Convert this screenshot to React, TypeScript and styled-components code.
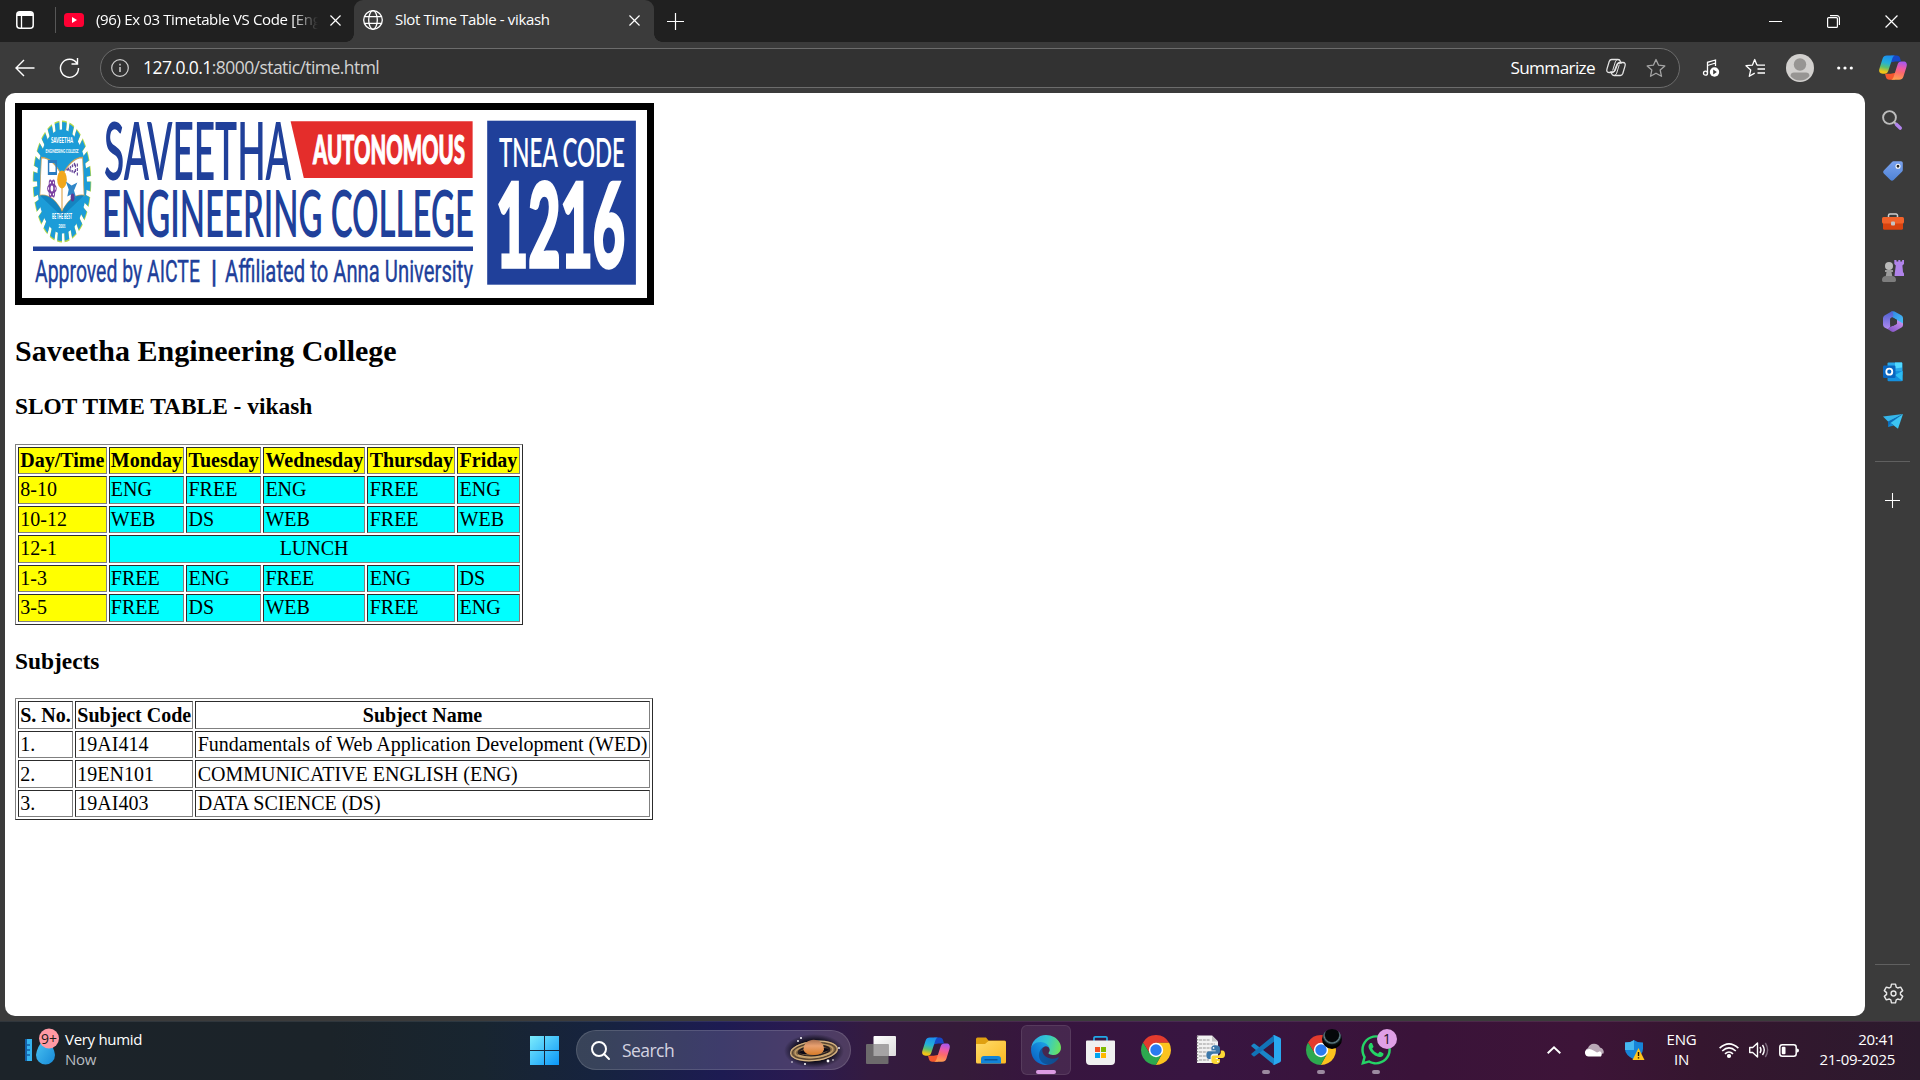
import React from "react";
import styled, { createGlobalStyle } from "styled-components";
import { FaWhatsapp } from "react-icons/fa";

const ui = `"Open Sans", "Noto Sans", sans-serif`;

const GlobalStyle = createGlobalStyle`
  html, body { margin: 0; padding: 0; background: #3b3b3b; }
  * { box-sizing: border-box; }
`;

const Screen = styled.div`
  width: 1920px;
  height: 1080px;
  display: flex;
  flex-direction: column;
  overflow: hidden;
  background: #3b3b3b;
  color: #fff;
  font-family: ${ui};
`;

const Row = styled.div`
  display: flex;
  align-items: center;
`;

const Icon = styled.svg<{ $ml?: number; $mt?: number }>`
  display: block;
  flex: none;
  overflow: visible;
  margin-left: ${(p) => p.$ml ?? 0}px;
  margin-top: ${(p) => p.$mt ?? 0}px;
`;

const Label = styled.span<{ $size: number; $ls?: number; $color?: string }>`
  font-size: ${(p) => p.$size}px;
  letter-spacing: ${(p) => p.$ls ?? 0}px;
  color: ${(p) => p.$color ?? "#fff"};
  white-space: nowrap;
`;

/* ---------- tab strip ---------- */

const TabStrip = styled.header`
  height: 42px;
  flex: none;
  display: flex;
  background: #202020;
`;

const StripStart = styled(Row)`
  width: 57px;
  padding-left: 16px;
  gap: 21px;
  height: 40px;
`;

const Divider = styled.i`
  width: 1px;
  height: 26px;
  background: #575757;
`;

const InactiveTab = styled(Row)`
  width: 297px;
  height: 40px;
  padding-left: 7px;
`;

const FadedTitle = styled.div`
  width: 222px;
  margin-left: 12px;
  padding-bottom: 2px;
  overflow: hidden;
  line-height: 24px;
  display: flex;
  mask-image: linear-gradient(90deg, #000 88%, transparent 100%);
`;

const ActiveTab = styled(Row)`
  position: relative;
  width: 300px;
  height: 42px;
  padding: 0 14px 2px 9px;
  background: #3b3b3b;
  border-radius: 9px 9px 0 0;
  &::before,
  &::after {
    content: "";
    position: absolute;
    bottom: 0;
    width: 8px;
    height: 8px;
  }
  &::before {
    left: -8px;
    background: radial-gradient(circle at 0 0, transparent 7.5px, #3b3b3b 8px);
  }
  &::after {
    right: -8px;
    background: radial-gradient(circle at 100% 0, transparent 7.5px, #3b3b3b 8px);
  }
`;

const TabTitle = styled(Label)`
  margin-left: 12px;
  padding-bottom: 2px;
  flex: 1;
`;

const WindowButtons = styled(Row)`
  margin-left: auto;
  height: 42px;
  padding-right: 22px;
  gap: 45px;
`;

/* ---------- toolbar ---------- */

const Toolbar = styled.nav`
  height: 51px;
  flex: none;
  display: flex;
  align-items: center;
  padding: 0 13px 0 15px;
`;

const NavButtons = styled(Row)`
  width: 85px;
  gap: 24px;
`;

const AddressBar = styled(Row)`
  width: 1580px;
  height: 40px;
  padding: 0 13px 0 10px;
  border: 1px solid #6c6c6c;
  border-radius: 20px;
  background: #323232;
`;

const Url = styled(Label)`
  margin-left: 14px;
  padding-bottom: 1px;
  flex: 1;
`;

const Summarize = styled(Label)`
  padding-bottom: 1px;
`;

const ToolbarEnd = styled(Row)`
  flex: 1;
  padding-left: 22px;
`;

/* ---------- page + sidebar ---------- */

const Middle = styled.div`
  display: flex;
  height: 928px;
  flex: none;
`;

const PageFrame = styled.main`
  width: 1860px;
  height: 923px;
  margin-left: 5px;
  background: #fff;
  border-radius: 10px;
  overflow: hidden;
  color: #000;
`;

const Page = styled.div`
  zoom: 1.25;
  padding: 8px;
  font: 16px "Liberation Serif", "Times New Roman", serif;
`;

const Banner = styled.svg`
  border: 6px solid #000;
  box-sizing: content-box;
`;

const Title = styled.h2`
  font-size: 1.5em;
  margin: 0.83em 0;
`;

const Heading = styled.h3`
  font-size: 1.17em;
  margin: 1em 0;
`;

const Table = styled.table`
  border: 1px outset gray;
  border-spacing: 2px;
  border-collapse: separate;
`;

const Cell = styled.td<{ $bg?: string; $center?: boolean }>`
  border: 1px inset gray;
  padding: 1px;
  background: ${(p) => p.$bg ?? "transparent"};
  text-align: ${(p) => (p.$center ? "center" : "left")};
`;

const HeadCell = styled(Cell)`
  font-weight: bold;
  text-align: center;
`;

const Sidebar = styled.aside`
  width: 55px;
  padding: 2px 0 0;
  display: flex;
  flex-direction: column;
  align-items: center;
`;

const SideItem = styled.div<{ $h?: number }>`
  height: ${(p) => p.$h ?? 50.2}px;
  flex: none;
  display: flex;
  align-items: center;
  justify-content: center;
`;

const SideRule = styled.i<{ $top?: string }>`
  width: 35px;
  height: 1px;
  flex: none;
  margin-top: ${(p) => p.$top ?? "15px"};
  background: #606060;
`;

/* ---------- taskbar ---------- */

const Taskbar = styled.footer`
  height: 59px;
  flex: none;
  display: flex;
  align-items: center;
  padding-bottom: 1px;
  box-shadow: inset 0 1px rgba(255, 255, 255, 0.09);
  background: linear-gradient(
    90deg,
    #1c2329 0,
    #1b2329 330px,
    #182530 480px,
    #16233f 600px,
    #1d1b52 720px,
    #2a1a50 800px,
    #341b40 870px,
    #351b39 960px,
    #37153f 1040px,
    #381541 1200px,
    #3a1339 1420px,
    #3d1438 1580px,
    #35162f 1700px,
    #2c1a2d 1920px
  );
`;

const Weather = styled(Row)`
  width: 521px;
  padding-left: 25px;
`;

const Lines = styled.div<{ $align?: string; $ml: number }>`
  display: flex;
  flex-direction: column;
  text-align: ${(p) => p.$align ?? "left"};
  line-height: 20px;
  margin: -3px 0 0 ${(p) => p.$ml}px;
`;

const StartButton = styled(Row)`
  width: 55px;
  padding-left: 9px;
`;

const SearchBox = styled(Row)`
  width: 275px;
  height: 40px;
  padding: 0 6px 0 14px;
  border-radius: 20px;
  border: 1px solid rgba(255, 255, 255, 0.13);
  background: rgba(255, 255, 255, 0.15);
`;

const SearchText = styled(Label)`
  flex: 1;
  margin-left: 12px;
  padding-bottom: 1px;
`;

const Apps = styled(Row)`
  gap: 5px;
  margin-left: 5px;
`;

const App_ = styled.div<{ $active?: boolean; $running?: boolean }>`
  position: relative;
  width: 50px;
  height: 50px;
  display: flex;
  align-items: center;
  justify-content: center;
  border-radius: 6px;
  border: 1px solid ${(p) => (p.$active ? "rgba(255,255,255,.09)" : "transparent")};
  background: ${(p) => (p.$active ? "rgba(255,255,255,.08)" : "transparent")};
  &::after {
    content: "";
    display: ${(p) => (p.$active || p.$running ? "block" : "none")};
    position: absolute;
    bottom: 0;
    width: ${(p) => (p.$active ? 20 : 8)}px;
    height: 4px;
    border-radius: 2px;
    background: ${(p) => (p.$active ? "#dc9be4" : "#9c8aa0")};
  }
`;

const Badge = styled.b<{ $bg: string }>`
  position: absolute;
  top: 3px;
  right: 3px;
  width: 20px;
  height: 20px;
  border-radius: 50%;
  background: ${(p) => p.$bg};
  color: #1c1020;
  font-weight: 400;
  font-size: 14px;
  line-height: 20px;
  text-align: center;
`;

const Tray = styled(Row)`
  margin-left: auto;
  padding-right: 25px;
`;

/* ---------- drawings ---------- */

const Copilot = ({ w, ml }: { w: number; ml?: number }) => (
  <Icon width={w} height={w * 0.9} viewBox="0 0 30 27" $ml={ml}>
    <defs>
      <linearGradient id="cpL" x1="0.5" y1="0" x2="0.3" y2="1">
        <stop offset="0" stopColor="#1c8ff0" />
        <stop offset=".4" stopColor="#24b0d8" />
        <stop offset=".65" stopColor="#5cc070" />
        <stop offset=".9" stopColor="#f0c418" />
      </linearGradient>
      <linearGradient id="cpR" x1="0.6" y1="0" x2="0.4" y2="1">
        <stop offset="0" stopColor="#ffa04e" />
        <stop offset=".4" stopColor="#fb6b6a" />
        <stop offset=".65" stopColor="#ee5aa5" />
        <stop offset="1" stopColor="#a758ee" />
      </linearGradient>
    </defs>
    <path d="M13 .5h6c2 0 3 1 3.600 3l1 3.500h-6L12 8z" fill="#1648c8" />
    <path d="M17 26.500h-6c-2 0-3-1-3.600-3l-1-3.500h6L18 19z" fill="#f4572e" />
    <path d="M8.500.5h9c-1.800.3-2.700 1.500-3.300 3.500l-4.200 13c-.7 2.200-1.800 3-4 3H4c-3.300 0-4.500-2.200-3.500-5.500L3.800 4C4.600 1.600 6 .5 8.500.5Z" fill="url(#cpL)" />
    <path transform="rotate(180 15 13.5)" d="M8.500.5h9c-1.800.3-2.700 1.500-3.300 3.500l-4.200 13c-.7 2.200-1.800 3-4 3H4c-3.300 0-4.500-2.200-3.500-5.500L3.800 4C4.600 1.600 6 .5 8.500.5Z" fill="url(#cpR)" />
  </Icon>
);

const Chrome = () => (
  <Icon width={30} height={30} viewBox="-15 -15 30 30">
    <path d="M0-7.200H13.150A15 15 0 0 0-12.990-7.500L-6.200 3.600Z" fill="#e33b2e" />
    <path d="M6.200 3.600L-.2 15A15 15 0 0 0 13.150-7.200H0Z" fill="#fcc31e" />
    <path d="M-6.200 3.600L-12.990-7.500A15 15 0 0 0-.2 15L6.200 3.600Z" fill="#2da94f" />
    <circle r="7.200" fill="#fff" />
    <circle r="5.700" fill="#2a7bf0" />
  </Icon>
);

const Edge = () => (
  <Icon width={30} height={30} viewBox="0 0 256 256">
    <defs>
      <linearGradient id="e1" x1="0" y1="0" x2="1" y2="0">
        <stop offset="0" stopColor="#0c59a4" />
        <stop offset="1" stopColor="#114a8b" />
      </linearGradient>
      <linearGradient id="e2" x1=".9" y1=".3" x2=".3" y2="1">
        <stop offset="0" stopColor="#1b9de2" />
        <stop offset=".4" stopColor="#1383d8" />
        <stop offset="1" stopColor="#0a64c4" />
      </linearGradient>
      <linearGradient id="e3" x1="0" y1=".4" x2="1" y2=".6">
        <stop offset="0" stopColor="#2aa8e8" />
        <stop offset=".5" stopColor="#33c8cf" />
        <stop offset="1" stopColor="#6ce35c" />
      </linearGradient>
    </defs>
    <path fill="url(#e1)" d="M231 190.500c-3.400 1.800-6.900 3.400-10.500 4.700a101.500 101.500 0 0 1-35.900 6.500c-47.300 0-88.500-32.500-88.500-74.300a31.500 31.500 0 0 1 16.400-27.300c-42.800 1.800-53.800 46.400-53.800 72.500 0 73.900 68.100 81.400 82.800 81.400 7.900 0 19.800-2.300 27-4.600l1.300-.4a128.300 128.300 0 0 0 66.600-52.800 4 4 0 0 0-5.400-5.700z" />
    <path fill="url(#e2)" d="M105.700 241.400a79.200 79.200 0 0 1-22.700-21.300 80.700 80.700 0 0 1 29.500-120c3.200-1.500 8.500-4.100 15.600-4a32.400 32.400 0 0 1 25.700 13 31.900 31.900 0 0 1 6.300 18.700c0-.2 24.500-79.600-80-79.600-43.900 0-80 41.700-80 78.200a130.200 130.200 0 0 0 12.100 56 128 128 0 0 0 156.400 67 75.500 75.500 0 0 1-62.800-8z" />
    <path fill="url(#e3)" d="M152.300 148.900c-.9 1-3.400 2.500-3.400 5.600 0 2.600 1.700 5.200 4.800 7.300 14.300 10 41.400 8.600 41.500 8.600 10.700 0 21.100-2.900 30.300-8.300a61.400 61.400 0 0 0 30.400-52.900c.3-22.400-8-37.300-11.300-43.900C223.500 23.900 177.700 0 128 0A128 128 0 0 0 0 126.200c.5-36.500 36.800-66 80-66 3.500 0 23.500.3 42 10.100 16.300 8.600 24.900 18.900 30.800 29.200 6.200 10.700 7.300 24.100 7.300 29.500 0 5.300-2.700 13.300-7.800 19.900z" />
  </Icon>
);

const Cross = ({ size, ml, sw = 1.3 }: { size: number; ml?: number; sw?: number }) => (
  <Icon width={size} height={size} viewBox="0 0 12 12" $ml={ml} fill="none" stroke="#fff" strokeWidth={sw}>
    <path d="M.5.5l11 11M11.500.5l-11 11" />
  </Icon>
);

const Plus = ({ size, ml }: { size: number; ml?: number }) => (
  <Icon width={size} height={size} viewBox="0 0 17 17" $ml={ml} stroke="#fff" strokeWidth="1.200">
    <path d="M8.500 0v17M0 8.500h17" />
  </Icon>
);

type FitProps = { x: number; y: number; w: number; size: number; weight: number; fill: string; family?: string; bold?: number; children: string };
const Fit = ({ x, y, w, size, weight, fill, family = "Lato", bold = 0, children }: FitProps) => (
  <text x={x} y={y} fontSize={size} fontWeight={weight} fill={fill} stroke={fill} strokeWidth={bold} fontFamily={`${family}, sans-serif`} textLength={w} lengthAdjust="spacingAndGlyphs">
    {children}
  </text>
);

const CollegeBanner = () => (
  <Banner width="500" height="150" viewBox="0 0 625 187.5">
    <rect width="625" height="187.5" fill="#fff" />
    <g transform="translate(40 71.5) scale(.48 1)">
      <circle r="56" fill="none" stroke="#b5d84a" strokeWidth="10" pathLength="240" strokeDasharray="6.500 3.500" />
      <circle r="54.500" fill="none" stroke="#1c9cd8" strokeWidth="10" pathLength="240" strokeDasharray="6 4" strokeDashoffset="-.2" />
      <circle r="52" fill="#1c9cd8" />
      <path d="M-43-24Q-20-24 0 -6Q20-24 43-24L46 14Q20 12 0 30Q-20 12-46 14Z" fill="#fff" stroke="#c9a25c" strokeWidth="1.500" />
      <path d="M-46 14Q-20 12 0 30Q20 12 46 14L0 35Z" fill="#1484c0" />
      <path d="M0-6V30" stroke="#d9962c" strokeWidth="2" />
      <ellipse cy="-2" rx="10" ry="9" fill="#f2a81d" />
      <rect x="-28" y="-20" width="16" height="12" fill="none" stroke="#2a7cc0" strokeWidth="3" />
      <path d="M12-12l16-6v9zM32-18v12" stroke="#6a4a9c" strokeWidth="2.500" fill="none" strokeDasharray="3 1.500" />
      <g fill="none" stroke="#7b3fa0" strokeWidth="2">
        <ellipse cx="-21" cy="7" rx="9" ry="4" />
        <ellipse cx="-21" cy="7" rx="9" ry="4" transform="rotate(60 -21 7)" />
        <ellipse cx="-21" cy="7" rx="9" ry="4" transform="rotate(120 -21 7)" />
      </g>
      <path d="M8 0l12 4 12-3-7 8 5 8-11-4-8 2 3-7z" fill="#2f86c8" />
      <circle cx="22" cy="16" r="4" fill="#5b3c96" />
    </g>
    <Fit x={29} y={32.5} w={22} size={8} weight={900} fill="#fff">SAVEETHA</Fit>
    <Fit x={23.5} y={42.5} w={33} size={6} weight={900} fill="#fff">ENGINEERING COLLEGE</Fit>
    <Fit x={30} y={108.5} w={20} size={6.5} weight={900} fill="#fff">BE THE BEST</Fit>
    <Fit x={36.5} y={117.5} w={7} size={6} weight={900} fill="#fff">2001</Fit>
    <Fit x={82} y={70} w={187} size={80} weight={600} fill="#20409a">SAVEETHA</Fit>
    <Fit x={80} y={126.7} w={372} size={66} weight={600} fill="#20409a">ENGINEERING COLLEGE</Fit>
    <path d="M268.600 11.300H450.600V68H281.800Z" fill="#e42d2b" />
    <Fit x={291} y={53.7} w={152} size={39} weight={900} bold={1.2} fill="#fff">AUTONOMOUS</Fit>
    <rect x="11" y="136.500" width="440" height="4.500" fill="#20409a" />
    <Fit x={13} y={172.3} w={165} size={32} weight={400} bold={0.4} fill="#20409a" family="Roboto">Approved by AICTE</Fit>
    <Fit x={188.5} y={172.3} w={7} size={32} weight={400} bold={0.4} fill="#20409a" family="Roboto">|</Fit>
    <Fit x={203} y={172.3} w={248} size={32} weight={400} bold={0.4} fill="#20409a" family="Roboto">Affiliated to Anna University</Fit>
    <rect x="465.200" y="10.700" width="148.700" height="164" fill="#20409a" />
    <Fit x={477} y={57} w={126} size={41} weight={600} fill="#fff">TNEA CODE</Fit>
    <Fit x={474} y={156.7} w={129} size={117} weight={900} bold={3.5} fill="#fff">1216</Fit>
  </Banner>
);

/* ---------- data ---------- */

const days = ["Day/Time", "Monday", "Tuesday", "Wednesday", "Thursday", "Friday"];
const slots: [string, string[]][] = [
  ["8-10", ["ENG", "FREE", "ENG", "FREE", "ENG"]],
  ["10-12", ["WEB", "DS", "WEB", "FREE", "WEB"]],
  ["12-1", ["LUNCH"]],
  ["1-3", ["FREE", "ENG", "FREE", "ENG", "DS"]],
  ["3-5", ["FREE", "DS", "WEB", "FREE", "ENG"]],
];
const subjects = [
  ["1.", "19AI414", "Fundamentals of Web Application Development (WED)"],
  ["2.", "19EN101", "COMMUNICATIVE ENGLISH (ENG)"],
  ["3.", "19AI403", "DATA SCIENCE (DS)"],
];

const Timetable = () => (
  <Page>
    <CollegeBanner />
    <Title>Saveetha Engineering College</Title>
    <Heading>SLOT TIME TABLE - vikash</Heading>
    <Table>
      <tbody>
        <tr>
          {days.map((d) => (
            <HeadCell as="th" key={d} $bg="yellow">{d}</HeadCell>
          ))}
        </tr>
        {slots.map(([time, names]) => (
          <tr key={time}>
            <Cell $bg="yellow">{time}</Cell>
            {names.map((n, i) => (
              <Cell key={i} $bg="cyan" $center={names.length === 1} colSpan={names.length === 1 ? 5 : 1}>{n}</Cell>
            ))}
          </tr>
        ))}
      </tbody>
    </Table>
    <Heading>Subjects</Heading>
    <Table>
      <tbody>
        <tr>
          {["S. No.", "Subject Code", "Subject Name"].map((h) => (
            <HeadCell as="th" key={h}>{h}</HeadCell>
          ))}
        </tr>
        {subjects.map((s) => (
          <tr key={s[0]}>
            {s.map((v) => (
              <Cell key={v}>{v}</Cell>
            ))}
          </tr>
        ))}
      </tbody>
    </Table>
  </Page>
);

const Tabs = () => (
  <TabStrip>
    <StripStart>
      <Icon width={18} height={18} viewBox="0 0 18 18">
        <rect x=".8" y=".8" width="16.400" height="16.400" rx="3" fill="none" stroke="#fff" strokeWidth="1.500" />
        <path d="M1 5V4a3 3 0 0 1 3-3h10a3 3 0 0 1 3 3v1z" fill="#fff" />
        <path d="M5.500 5v12" stroke="#fff" strokeWidth="1.300" />
      </Icon>
      <Divider />
    </StripStart>
    <InactiveTab>
      <Icon width={20} height={14} viewBox="0 0 20 14">
        <rect width="20" height="14" rx="3.500" fill="#ff0033" />
        <path d="M8 4l5 3-5 3z" fill="#fff" />
      </Icon>
      <FadedTitle>
        <Label $size={15} $ls={-0.35}>(96) Ex 03 Timetable VS Code [English]</Label>
      </FadedTitle>
      <Cross size={11} ml={12} />
    </InactiveTab>
    <ActiveTab>
      <Icon width={20} height={20} viewBox="0 0 20 20" fill="none" stroke="#fff" strokeWidth="1.300">
        <circle cx="10" cy="10" r="9.300" />
        <ellipse cx="10" cy="10" rx="4.300" ry="9.300" />
        <path d="M1.500 6.700h17M1.500 13.300h17" />
      </Icon>
      <TabTitle $size={15} $ls={-0.35}>Slot Time Table - vikash</TabTitle>
      <Cross size={11} />
    </ActiveTab>
    <Row>
      <Plus size={17} ml={13} />
    </Row>
    <WindowButtons>
      <Icon width={13} height={13} viewBox="0 0 13 13" stroke="#fff">
        <path d="M0 6.500h13" />
      </Icon>
      <Icon width={13} height={13} viewBox="0 0 13 13" fill="none" stroke="#fff" strokeWidth="1.200">
        <rect x=".6" y="2.600" width="9.800" height="9.800" rx="1" />
        <path d="M3 .6h7a2.400 2.400 0 0 1 2.400 2.400v7" />
      </Icon>
      <Cross size={13} sw={1.1} />
    </WindowButtons>
  </TabStrip>
);

const star = "M10 1.500l2.600 5.700 6.200.7-4.600 4.200 1.300 6.200L10 15.200l-5.500 3.100 1.300-6.200L1.200 7.900l6.200-.7z";

const Tools = () => (
  <Toolbar>
    <NavButtons>
      <Icon width={20} height={18} viewBox="0 0 20 18" fill="none" stroke="#fff" strokeWidth="1.400">
        <path d="M19.500 9H1M9 1L1 9l8 8" />
      </Icon>
      <Icon width={21} height={20} viewBox="0 0 21 20" fill="none" stroke="#fff" strokeWidth="1.400">
        <path d="M18 5.300A9 9 0 1 0 19.500 10M18.500 0v6h-6" />
      </Icon>
    </NavButtons>
    <AddressBar>
      <Icon width={18} height={18} viewBox="0 0 18 18" fill="none" stroke="#d0d0d0" strokeWidth="1.200">
        <circle cx="9" cy="9" r="8.300" />
        <path d="M9 8v5M9 4.800v1.600" strokeWidth="1.500" />
      </Icon>
      <Url $size={17.5} $ls={-0.56}>
        127.0.0.1<Label $size={17.5} $ls={-0.56} $color="#d2d2d2">:8000/static/time.html</Label>
      </Url>
      <Summarize $size={17.2} $ls={-0.65}>Summarize</Summarize>
      <Icon width={20} height={19} viewBox="0 0 30 27" $ml={11} fill="none" stroke="#e4e4e4" strokeWidth="1.900">
        <path d="M8.500 1.500H18c2 0 3 1 3.600 3l.9 2.500h-3c-2 0-3 1-3.600 3l-3 8c-.7 2.200-1.800 3-4 3H4.500c-3 0-4-2.200-3-5.500L4.800 4.500c.7-2 1.700-3 3.700-3Z" />
        <path transform="rotate(180 15 13.5)" d="M8.500 1.500H18c2 0 3 1 3.600 3l.9 2.500h-3c-2 0-3 1-3.600 3l-3 8c-.7 2.200-1.800 3-4 3H4.500c-3 0-4-2.200-3-5.500L4.800 4.500c.7-2 1.700-3 3.700-3Z" />
        <path d="M17.500 1.500Q15 2 14 5L10 18M12.500 25.500Q15 25 16 22l4-13" strokeWidth="1.500" />
      </Icon>
      <Icon width={20} height={20} viewBox="0 0 20 20" $ml={20} fill="none" stroke="#a4a4a4" strokeWidth="1.300">
        <path d={star} strokeLinejoin="round" />
      </Icon>
    </AddressBar>
    <ToolbarEnd>
      <Icon width={18} height={18} viewBox="0 0 18 18" fill="none" stroke="#fff" strokeWidth="1.300">
        <path d="M5.500 14V3.300L13.500 1v6M5.500 6.500L13.500 4" />
        <circle cx="3.500" cy="14.200" r="2" />
        <circle cx="12.500" cy="13" r="4.700" fill="#fff" stroke="none" />
        <path d="M11.200 10.600l3.600 2.400-3.600 2.400z" fill="#3b3b3b" stroke="none" />
      </Icon>
      <Icon width={20} height={20} viewBox="0 0 20 20" $ml={25} fill="none" stroke="#fff" strokeWidth="1.300">
        <path d="M12 7.200L9.700 1.500 7.400 7.200 1 7.700l4.700 4.300-1.400 6.300 5.400-3.200" strokeLinejoin="round" />
        <path d="M12 7.200h8M12.500 11H20M12.500 15H20" />
      </Icon>
      <Icon width={28} height={28} viewBox="0 0 28 28" $ml={21}>
        <circle cx="14" cy="14" r="14" fill="#d2d0ce" />
        <circle cx="14" cy="10.500" r="6.200" fill="#979593" />
        <path d="M4.500 22c0-2.500 1.500-3.500 3.500-3.500h12c2 0 3.500 1 3.500 3.500-5 6-14 6-19 0z" fill="#979593" />
      </Icon>
      <Icon width={16} height={4} viewBox="0 0 16 4" $ml={23} fill="#fff">
        <circle cx="1.700" cy="2" r="1.600" /><circle cx="8" cy="2" r="1.600" /><circle cx="14.300" cy="2" r="1.600" />
      </Icon>
      <Copilot w={28} ml={26} />
    </ToolbarEnd>
  </Toolbar>
);

const Side = () => (
  <Sidebar>
    <SideItem>
      <Icon width={20} height={20} viewBox="0 0 20 20" $ml={-1} fill="none">
        <path d="M14.500 14.500l3.700 3.500" stroke="#b184ec" strokeWidth="3.600" strokeLinecap="round" />
        <circle cx="7.500" cy="7.500" r="6.400" stroke="#bdbdbd" strokeWidth="1.900" />
        <path d="M12 12l1.500 1.500" stroke="#bdbdbd" strokeWidth="1.900" />
      </Icon>
    </SideItem>
    <SideItem>
      <Icon width={20} height={20} viewBox="0 0 20 20" $mt={1}>
        <defs><linearGradient id="tg" x1="0" y1="0" x2="0" y2="1"><stop stopColor="#7aa2ee" /><stop offset="1" stopColor="#4f83d6" /></linearGradient></defs>
        <path d="M10.500.3H18a1.800 1.800 0 0 1 1.800 1.800V9a2 2 0 0 1-.6 1.400l-8.600 8.700a2.300 2.300 0 0 1-3.200 0L.8 12.600a2.300 2.300 0 0 1 0-3.200L9 .9A2 2 0 0 1 10.500.3z" fill="url(#tg)" />
        <circle cx="15" cy="5.200" r="2" fill="#262626" stroke="#fff" strokeWidth="1.100" />
      </Icon>
    </SideItem>
    <SideItem>
      <Icon width={22} height={17} viewBox="0 0 22 17" $mt={3}>
        <path d="M6.500 5V2.500A1.500 1.500 0 0 1 8 1h6a1.500 1.500 0 0 1 1.500 1.500V5" fill="none" stroke="#cfcfcf" strokeWidth="1.500" />
        <rect x="1" y="8" width="20" height="8.800" rx="1.500" fill="#d8430f" />
        <rect x="0" y="4" width="22" height="6.500" rx="1.500" fill="#f1622a" />
        <rect x="9" y="8.500" width="4" height="4" rx="1" fill="#c4c4c4" />
      </Icon>
    </SideItem>
    <SideItem>
      <Icon width={22} height={22} viewBox="0 0 22 22">
        <path d="M12.300 0h2.200v1.500h1.800V0h2v1.500h1.800V0H22v4l-1.600 1.500.6 6.500 1 1.500V16h-9.500l.3-3 1-7.500L12.300 4z" fill="#b083ea" />
        <circle cx="7" cy="6" r="4" fill="#b9b9b9" />
        <path d="M3 10h8v2H9.500l.8 4.500H3.700L4.500 12H3z" fill="#9c9c9c" />
        <path d="M0 20c0-2.500 1.500-4 4-4h6c2.500 0 4 1.500 4 4 0 1.300-.6 2-1.500 2h-11C.6 22 0 21.300 0 20z" fill="#7d7d7d" />
      </Icon>
    </SideItem>
    <SideItem>
      <Icon width={20} height={21} viewBox="0 0 20 21" $mt={2}>
        <defs>
          <linearGradient id="m1" x1="0" y1="0" x2="0" y2="1"><stop stopColor="#4a5fd0" /><stop offset="1" stopColor="#b08af0" /></linearGradient>
          <linearGradient id="m2" x1="0" y1="0" x2="1" y2="1"><stop stopColor="#2f7fe0" /><stop offset="1" stopColor="#48c5f8" /></linearGradient>
          <linearGradient id="m3" x1="0" y1="1" x2="1" y2="0"><stop stopColor="#7a4bc0" /><stop offset="1" stopColor="#d29af2" /></linearGradient>
        </defs>
        <path d="M8.500.6q1.500-.9 3 0l6.800 3.700Q20 5.300 20 7v7l-6-3.500V9L6.500 4.500z" fill="url(#m2)" />
        <path d="M20 12.500V14q0 1.700-1.500 2.600l-7 3.900q-1.500.8-3 0L4 17.800 14 12.500V9z" fill="url(#m3)" />
        <path d="M8.500.6L1.500 4.500Q0 5.500 0 7.300v6.400q0 1.800 1.500 2.700l3 1.700 2.700-2V7.500L10.500 5 9.500.2z" fill="url(#m1)" />
        <path d="M7.200 8.300L10 6.700l3.800 2v4.200L10 15l-2.800-1.600z" fill="#3b3b3b" />
      </Icon>
    </SideItem>
    <SideItem>
      <Icon width={20} height={20} viewBox="0 0 20 20" $mt={1}>
        <rect x="4.500" y=".5" width="15" height="13" rx="1" fill="#28a8ea" />
        <path d="M12 .5h7v5l-7 1z" fill="#50d9ff" />
        <path d="M4.500 9l15 0v9a1.300 1.300 0 0 1-1.300 1.300H5.800A1.300 1.300 0 0 1 4.500 18z" fill="#1490df" />
        <path d="M19.500 9v10L12 13z" fill="#2cbcf2" />
        <rect x="0" y="3.500" width="12.500" height="12.500" rx="1.200" fill="#0a66bf" />
        <circle cx="6.300" cy="9.700" r="3" fill="none" stroke="#fff" strokeWidth="1.800" />
      </Icon>
    </SideItem>
    <SideItem>
      <Icon width={20} height={15} viewBox="0 0 20 15">
        <path d="M0 2.500L20 0 5.500 8z" fill="#35b6ea" />
        <path d="M20 0L5 7.500V13z" fill="#0d6cb8" />
        <path d="M20 0L7.500 9 15 14.700z" fill="#3cc4f2" />
        <path d="M5 13l2.500-4L11 11.500z" fill="#1588d0" />
      </Icon>
    </SideItem>
    <SideRule />
    <SideItem $h={77}><Plus size={15} /></SideItem>
    <SideRule $top="auto" />
    <SideItem $h={56}>
      <Icon width={21} height={21} viewBox="0 0 24 24" $ml={1} fill="none" stroke="#e8e8e8" strokeWidth="1.600" strokeLinejoin="round">
        <path d="M9.700 1.300h4.600l.8 3.400 1.700 1 3.400-1 2.300 4-2.600 2.300v2l2.600 2.300-2.300 4-3.400-1-1.700 1-.8 3.400H9.700l-.8-3.400-1.700-1-3.400 1-2.300-4L4.100 13v-2L1.500 8.700l2.300-4 3.400 1 1.700-1z" />
        <circle cx="12" cy="12" r="2.800" />
      </Icon>
    </SideItem>
  </Sidebar>
);

const Bottom = () => (
  <Taskbar>
    <Weather>
      <Icon width={30} height={38} viewBox="0 0 30 38" $mt={-4}>
        <defs><linearGradient id="dr" x1="0" y1="0" x2="1" y2="1"><stop stopColor="#4fc8f4" /><stop offset="1" stopColor="#1689d8" /></linearGradient></defs>
        <rect x="0" y="10" width="7" height="22" fill="#35b4f0" />
        <rect x="0" y="10" width="2" height="22" fill="#1560a8" />
        <path d="M2 16h3M2 21h3M2 26h3" stroke="#1560a8" strokeWidth="1.300" />
        <path d="M20.500 7.500q9 11 9.500 18.500a9.500 9.500 0 0 1-19 0Q11.500 18.500 20.500 7.500z" fill="url(#dr)" />
        <circle cx="24" cy="9.500" r="10" fill="#ff99a4" />
        <text x="24" y="14.500" textAnchor="middle" fontSize="14" fill="#1a1a1a" fontFamily={ui}>9+</text>
      </Icon>
      <Lines $ml={10}>
        <Label $size={15} $ls={-0.3}>Very humid</Label>
        <Label $size={15} $ls={-0.3} $color="#b8bcc0">Now</Label>
      </Lines>
    </Weather>
    <StartButton>
      <Icon width={29} height={29} viewBox="0 0 29 29">
        <defs><linearGradient id="wn" gradientUnits="userSpaceOnUse" x1="0" y1="0" x2="29" y2="29"><stop stopColor="#7cecfc" /><stop offset="1" stopColor="#0a96f8" /></linearGradient></defs>
        <path d="M0 0h14v14H0zM15 0h14v14H15zM0 15h14v14H0zM15 15h14v14H15z" fill="url(#wn)" />
      </Icon>
    </StartButton>
    <SearchBox>
      <Icon width={19} height={19} viewBox="0 0 19 19" fill="none" stroke="#fff" strokeWidth="2">
        <circle cx="8" cy="8" r="7" /><path d="M13 13l5 5" strokeLinecap="round" />
      </Icon>
      <SearchText $size={17.5} $ls={-0.55} $color="#d4d3e0">Search</SearchText>
      <Icon width={60} height={34} viewBox="0 0 60 34">
        <defs>
          <radialGradient id="glow"><stop offset=".6" stopColor="#0c0a16" /><stop offset="1" stopColor="#0c0a16" stopOpacity="0" /></radialGradient>
          <linearGradient id="sat" x1="0" y1="0" x2="0" y2="1"><stop stopColor="#a87050" /><stop offset=".4" stopColor="#e8a070" /><stop offset="1" stopColor="#d87c28" /></linearGradient>
        </defs>
        <ellipse cx="30" cy="18" rx="30" ry="17" fill="url(#glow)" />
        <g transform="rotate(-6 30 18)" fill="none">
          <ellipse cx="30" cy="18" rx="20" ry="6.500" stroke="#8a6c48" strokeWidth="7" />
          <ellipse cx="30" cy="18" rx="23.500" ry="9.500" stroke="#d6b484" strokeWidth="1.200" />
          <ellipse cx="30" cy="18" rx="21.500" ry="8" stroke="#4a3a2c" strokeWidth=".9" />
          <ellipse cx="30" cy="18" rx="19" ry="6.500" stroke="#c09c68" strokeWidth="1.300" />
          <ellipse cx="30" cy="18" rx="15.500" ry="5" stroke="#2a2020" strokeWidth="2" />
        </g>
        <path d="M19.500 17C19 3.500 40 3.500 40 16.500q-1 5-10 5.500Q21 22 19.500 17z" fill="url(#sat)" />
        <path d="M14 22.300q16 5 32-2.300" stroke="#c9a570" strokeWidth="1.600" fill="none" />
        <g fill="#fff"><circle cx="17" cy="5" r="1" /><circle cx="14" cy="8" r=".9" /><circle cx="55" cy="15" r=".9" /><circle cx="44" cy="28" r="1.400" /><circle cx="49" cy="27" r=".8" /><circle cx="21" cy="31" r="1" /><circle cx="8" cy="29" r=".8" /></g>
      </Icon>
    </SearchBox>
    <Apps>
      <App_>
        <Icon width={30} height={28} viewBox="0 0 30 28">
          <defs><linearGradient id="tv" x1="0" y1="0" x2="1" y2="1"><stop stopColor="#fff" /><stop offset="1" stopColor="#dcdcdc" /></linearGradient></defs>
          <rect x="7.500" y="0" width="22.500" height="20" rx="1" fill="url(#tv)" />
          <rect x="0" y="8" width="22.500" height="20" rx="1" fill="#6d6a6c" />
          <rect x="7.500" y="8" width="15" height="12" fill="#a5a3a4" />
        </Icon>
      </App_>
      <App_><Copilot w={28} /></App_>
      <App_>
        <Icon width={30} height={27} viewBox="0 0 30 27">
          <defs><linearGradient id="fl" x1="0" y1="0" x2="1" y2="1"><stop stopColor="#ffdb6a" /><stop offset="1" stopColor="#fbb922" /></linearGradient></defs>
          <path d="M0 2a1.500 1.500 0 0 1 1.500-1.500h8.500l2.500 3H28.500A1.500 1.500 0 0 1 30 5v6H0z" fill="#e0a010" />
          <path d="M0 7h9l3.500-3H28.500A1.500 1.500 0 0 1 30 5.500V25a1.500 1.500 0 0 1-1.500 1.500h-27A1.500 1.500 0 0 1 0 25z" fill="url(#fl)" />
          <path d="M5 26.500V22a3 3 0 0 1 3-3h14a3 3 0 0 1 3 3v4.500z" fill="#1284d8" />
          <path d="M8.500 22.800h13" stroke="#0a4c8c" strokeWidth="1.200" />
        </Icon>
      </App_>
      <App_ $active><Edge /></App_>
      <App_>
        <Icon width={29} height={29} viewBox="0 0 29 29" $ml={-1}>
          <path d="M8 6V2a1.200 1.200 0 0 1 1.200-1.200h10.600A1.200 1.200 0 0 1 21 2v4" fill="none" stroke="#22a8e8" strokeWidth="1.700" />
          <path d="M0 5.500A1 1 0 0 1 1 4.500h27a1 1 0 0 1 1 1V25a4 4 0 0 1-4 4H4a4 4 0 0 1-4-4z" fill="#f0f0f0" />
          <path d="M9 11h5v5H9z" fill="#f25022" /><path d="M15 11h5v5h-5z" fill="#7fba00" /><path d="M9 17h5v5H9z" fill="#00a4ef" /><path d="M15 17h5v5h-5z" fill="#ffb900" />
        </Icon>
      </App_>
      <App_><Chrome /></App_>
      <App_>
        <Icon width={30} height={30} viewBox="0 0 30 30">
          <path d="M1 .5h15l6 6V28H1z" fill="#f2f2f2" />
          <path d="M16 .5v6h6z" fill="#c4c4c4" />
          <path d="M3 5h11M3 9h16M3 13h16M3 17h10M3 21h10M3 25h10" stroke="#b5b5b5" strokeWidth="1.400" strokeDasharray="3 .8" />
          <path d="M1.500 1v27" stroke="#8c8c8c" strokeWidth="1.400" strokeDasharray="1.500 1.500" />
          <g transform="translate(9.500 9.500) scale(.85)">
            <path d="M11.900 1C7.500 1 7 3 7 4.500V7h5v1H4.500C2 8 1 10 1 12.500S2.200 17 4 17h2v-2.500C6 12.700 7.500 11 9.500 11h5C16 11 17 10 17 8.500v-4C17 2.500 15.500 1 11.900 1Z" fill="#3c78aa" />
            <path transform="rotate(180 12 12)" d="M11.900 1C7.500 1 7 3 7 4.500V7h5v1H4.500C2 8 1 10 1 12.500S2.200 17 4 17h2v-2.500C6 12.700 7.500 11 9.500 11h5C16 11 17 10 17 8.500v-4C17 2.500 15.500 1 11.900 1Z" fill="#fdd835" />
            <circle cx="9.500" cy="4" r="1" fill="#fff" /><circle cx="14.500" cy="20" r="1" fill="#fff" />
          </g>
        </Icon>
      </App_>
      <App_ $running>
        <Icon width={30} height={30} viewBox="0 0 30 30">
          <path d="M.6 10.300l1.700-1.600q.7-.5 1.500 0L23.500 23.700v5.800Q22.500 29.500 21.500 28.600L.6 11.600q-.7-.7 0-1.300z" fill="#1a86c8" />
          <path d="M.6 19.700l1.700 1.600q.7.5 1.500 0L23.500 6.300V.5Q22.500.5 21.500 1.400L.6 18.400q-.7.700 0 1.300z" fill="#1173b8" />
          <path d="M22 .5L23.200 0 29 2.800q1 .5 1 1.700v21q0 1.200-1 1.700L23.200 30l-1.700-.8q1.500.4 1.500-1.200V2q0-1.600-1.500-1.200z" fill="#29a8f0" />
        </Icon>
      </App_>
      <App_ $running>
        <Chrome />
        <Badge $bg="radial-gradient(circle at 50% 30%, #04080a 38%, #5f8088 46%, #081012 56%, #000 70%)" />
      </App_>
      <App_ $running>
        <FaWhatsapp size={34} color="#25d366" />
        <Badge $bg="#dfa0e6">1</Badge>
      </App_>
    </Apps>
    <Tray>
      <Icon width={14} height={8} viewBox="0 0 14 8" fill="none" stroke="#fff" strokeWidth="1.900"><path d="M.7 7.300L7 1.200l6.300 6.100" /></Icon>
      <Icon width={20} height={14} viewBox="0 0 20 14" $ml={23}>
        <path d="M4 12.500A4 4 0 0 1 4 5a6.500 6.500 0 0 1 12-.5 4.500 4.500 0 0 1 3.500 6z" fill="#b9a8b6" />
        <path d="M4.500 13.500a3.700 3.700 0 0 1-1.500-7Q6 5 9.500 7.500l3.500 2 3-1.300a3.600 3.600 0 0 1 1 5.300z" fill="#fff" />
      </Icon>
      <Icon width={20} height={20} viewBox="0 0 20 20" $ml={21}>
        <path d="M9 0Q12 2.500 18 2.500V9q0 6-9 10.500Q0 15 0 9V2.500Q6 2.500 9 0z" fill="#1684d8" />
        <path d="M9 0v10H0V2.500Q6 2.500 9 0z" fill="#46b8f0" />
        <path d="M13.500 8L19.500 20h-12z" fill="#ffc41c" />
        <path d="M13.500 12v4M13.500 17.300v1.300" stroke="#201000" strokeWidth="1.400" />
      </Icon>
      <Lines $align="center" $ml={22}>
        <Label $size={15} $ls={-0.2}>ENG</Label>
        <Label $size={15} $ls={-0.2}>IN</Label>
      </Lines>
      <Icon width={20} height={15} viewBox="0 0 20 15" $ml={22} fill="none" stroke="#fff" strokeWidth="1.600">
        <path d="M.6 5.200q9.400-8.600 18.800 0M3.200 8q6.800-6.200 13.600 0M6 10.800q4-3.600 8 0" />
        <circle cx="10" cy="13" r="1.300" fill="#fff" />
      </Icon>
      <Icon width={20} height={16} viewBox="0 0 20 16" $ml={10} fill="none" stroke="#fff" strokeWidth="1.400">
        <path d="M.7 5.500h3L8.500 1v14l-4.800-4.500h-3z" strokeLinejoin="round" />
        <path d="M11 5q2 3 0 6M13.500 3q3.500 5 0 10" />
        <path d="M16.300 1q4.600 7 0 14" stroke="#7a687a" />
      </Icon>
      <Icon width={20} height={13} viewBox="0 0 20 13" $ml={10}>
        <rect x=".8" y=".8" width="16.400" height="11.400" rx="2.500" fill="none" stroke="#fff" strokeWidth="1.500" />
        <rect x="2.800" y="2.800" width="3.700" height="7.400" rx="1" fill="#fff" />
        <path d="M18 4.500q2 0 2 2t-2 2z" fill="#fff" />
      </Icon>
      <Lines $align="right" $ml={21}>
        <Label $size={15} $ls={-0.28}>20:41</Label>
        <Label $size={15} $ls={-0.28}>21-09-2025</Label>
      </Lines>
    </Tray>
  </Taskbar>
);

export default function App() {
  return (
    <Screen>
      <GlobalStyle />
      <Tabs />
      <Tools />
      <Middle>
        <PageFrame><Timetable /></PageFrame>
        <Side />
      </Middle>
      <Bottom />
    </Screen>
  );
}
